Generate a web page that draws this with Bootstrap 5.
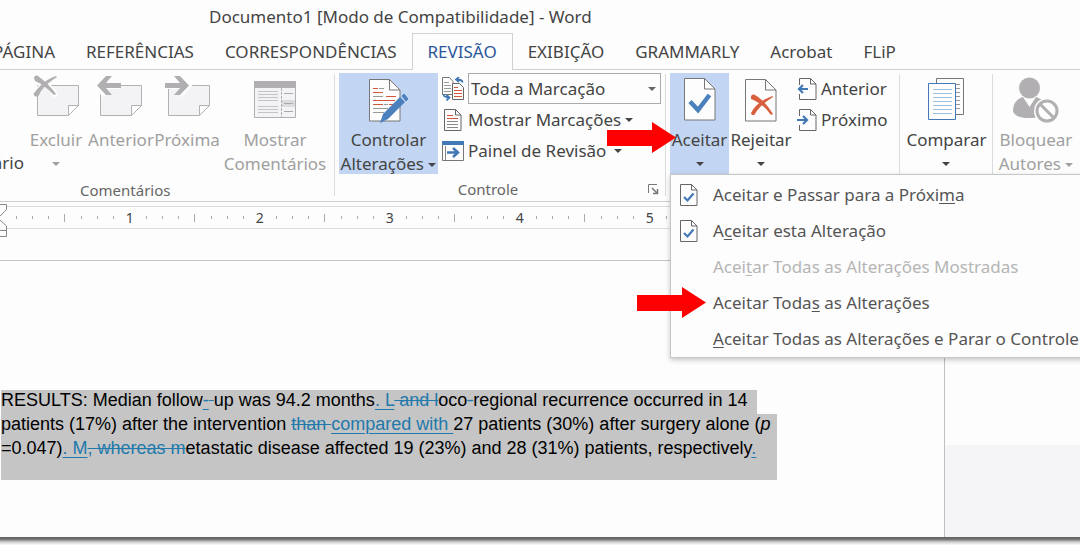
<!DOCTYPE html>
<html lang="pt-BR">
<head>
<meta charset="utf-8">
<meta name="viewport" content="width=device-width, initial-scale=1">
<title>Documento1 [Modo de Compatibilidade] - Word</title>
<link href="https://cdn.jsdelivr.net/npm/bootstrap@5.3.0/dist/css/bootstrap.min.css" rel="stylesheet">
<style>
body{font-family:"Noto Sans","Open Sans",sans-serif;font-size:17px;line-height:24px;color:#444;background:#fdfdfd;overflow:hidden}
.window{min-height:100vh}
.titlebar{height:33px;padding:5px 0 0 209px}
.ribbon-tabs{height:37px;border-bottom:1px solid #d0d1d2;flex-wrap:nowrap}
.ribbon-tabs .nav-link{color:#444;padding:6px 15px;height:37px;border:1px solid transparent;border-width:1px 1px 0;border-radius:0;white-space:nowrap;margin:0 -1px 0 0}
.ribbon-tabs .nav-link.active{color:#2b579a;background:#fdfdfd;border-color:#d0d1d2}
.cut-tab{width:70px;overflow:hidden}
.ribbon{border-bottom:1px solid #cfcfcf;height:132px}
.sep{width:1px;background:#dcdcdc;margin:4px 0 5px;flex:none}
.group{padding-top:3px;flex:none}
.caption{font-size:15px;color:#666;line-height:30px;position:relative}
.big{border:0;background:transparent;color:#444;padding:0;text-align:center;flex:none;height:101px;display:flex;flex-direction:column;align-items:center;white-space:nowrap}
.big>*{flex:none}
.big:disabled{color:#a0a0a0}
.big .pic{height:55px;display:flex;align-items:flex-start}
.big.on{background:#c2d5f2}
.line{border:0;background:transparent;color:#444;padding:0;height:31px;display:flex;align-items:center;gap:4px;white-space:nowrap}
.tri{display:inline-block;border:4px solid transparent;border-top-color:currentColor;border-bottom:0;vertical-align:3px}
.tri-row{height:24px;display:flex;align-items:center}
.cut-word{width:24px;height:102px;display:flex;justify-content:flex-end;overflow:hidden;align-items:flex-end}
.w-xs{width:64px}.w-sm{width:66px}.w-lg{width:110px}.w-track{width:99px}.w-accept{width:59px}.w-compare{width:92px}.w-block{width:85px}
.display-mode{width:193px;height:31px;padding:0 2px;border:1px solid #ababab;border-radius:0;color:#444;font-size:17px;line-height:24px;
background:#fdfdfd url("data:image/svg+xml,%3Csvg xmlns='http://www.w3.org/2000/svg' width='8' height='4'%3E%3Cpath d='M0 0h8l-4 4z' fill='%23666'/%3E%3C/svg%3E") no-repeat right 4px center;background-size:8px 4px}
.launcher{position:absolute;right:2px;top:10px;border:0;background:none;padding:0;line-height:0}
.accept-menu{display:block;left:0;top:101px;width:424px;padding:2px 0 0;border:1px solid #c6c6c6;border-radius:0;background:#fdfdfd;box-shadow:0 2px 5px rgba(0,0,0,.22);font-size:17px;z-index:5}
.accept-menu .dropdown-item{height:36px;padding:0 0 0 9px;display:flex;align-items:center;color:#555;background:none}
.accept-menu .dropdown-item.disabled{color:#b5b5b5}
.mi{width:33px;flex:none;line-height:0}
u{text-underline-offset:2px;text-decoration-thickness:1px}
.pointer{position:absolute;z-index:9;pointer-events:none}
.at-button{left:-63px;top:49px}
.at-item{left:-34px;top:112px}
.ruler{margin-top:4px;height:23px;border:1px solid #dcdcdc;border-width:1px 0;padding-left:8px;position:relative;font-size:14px}
.inch{display:grid;grid-template-columns:repeat(8,1fr);width:130px;flex:none;place-items:center;line-height:20px}
.tick{width:1px;height:3px;background:#aaa}
.tick.half{height:8px}
.indent{position:absolute;left:0;top:-3px}
.canvas{margin-top:31px;border-top:1px solid #c3c3c3}
.page{width:87.5%;border-right:1px solid #c0c0c4;padding:129px 0 57px 1px}
.comments-pane{height:184px}
.outside{background:#f5f4f7}
.copy{font:18px/20px "Liberation Sans",Arial,sans-serif;color:#000;margin:0;white-space:nowrap}
.row-text{display:block;width:fit-content;background:#c5c5c5;height:24px}
.row-a{padding-right:10px}.row-b{padding-right:7px}.row-c{height:42px;min-width:776px}
.copy ins,.copy del{color:#2279ab;text-decoration-thickness:1px}
.copy ins{text-underline-offset:3px}
.edge{height:8px;background:linear-gradient(#5d5f5d,#757775 30%,#c9c9c9 60%,#fdfdfd)}
</style>
</head>
<body>
<svg width="0" height="0" class="position-absolute" aria-hidden="true">
<defs>
<symbol id="note" viewBox="0 0 46 44"><path d="M4.500 11.500h41v20l-10 10h-31z" fill="#f3f2f4" stroke="#b3b1b4"/><path d="M35.500 41.500v-10h10z" fill="#fdfdfd" stroke="#b3b1b4"/></symbol>
<symbol id="sheet" viewBox="0 0 32 43"><path d="M.5.500h20l10.500 10.500v31H.5z" fill="#fdfdfd" stroke="#777"/><path d="M20.500.5v10.500H31" fill="none" stroke="#777"/></symbol>
<symbol id="sheet-s" viewBox="0 0 18 22"><path d="M.5.500h11l5.500 5.500v15.500H.5z" fill="#fdfdfd" stroke="#666"/><path d="M11.500.5V6H17" fill="none" stroke="#666"/></symbol>
<symbol id="sheet-ok" viewBox="0 0 18 22"><use href="#sheet-s" width="18" height="22"/><path d="M4 13l3.500 3.500L13.500 9.500" fill="none" stroke="#4178b5" stroke-width="2.200"/></symbol>
<symbol id="red-arrow" viewBox="0 0 69 31"><path d="M0 8h45V0l24 15.500L45 31v-7H0z" fill="#fe0000"/></symbol>
</defs></svg>

<div class="window d-flex flex-column">
<header class="titlebar text-nowrap">Documento1 [Modo de Compatibilidade] - Word</header>
<nav class="nav nav-tabs ribbon-tabs" aria-label="Guias">
<div class="cut-tab d-flex justify-content-end"><a class="nav-link" href="#">PÁGINA</a></div>
<a class="nav-link" href="#">REFERÊNCIAS</a>
<a class="nav-link" href="#">CORRESPONDÊNCIAS</a>
<a class="nav-link active" href="#" aria-current="page">REVISÃO</a>
<a class="nav-link" href="#">EXIBIÇÃO</a>
<a class="nav-link" href="#">GRAMMARLY</a>
<a class="nav-link" href="#">Acrobat</a>
<a class="nav-link" href="#">FLiP</a>
</nav>

<section class="ribbon d-flex">
<div class="group">
 <div class="d-flex">
  <div class="cut-word">ário</div>
  <button class="big w-xs" disabled><span class="pic"><svg width="46" height="46" viewBox="0 0 46 44"><use href="#note" width="46" height="44"/><path d="M3 4c8 4 15 10 20 18M24 3C14 6 7 12 3 20" fill="none" stroke="#fdfdfd" stroke-width="6"/><path d="M1 4c0-2 2-3 4-2 7 5 13 11 18 18l-2 1C15 15 9 10 2 7z" fill="#b1afb2"/><path d="M24 3C16 8 9 14 6 21c-1 2-4 2-5 0-1-1 0-2 1-3C7 11 14 5 23 2z" fill="#b1afb2"/></svg></span><span>Excluir</span><span class="tri-row"><i class="tri"></i></span></button>
  <button class="big w-sm" disabled><span class="pic pe-1"><svg width="46" height="46" viewBox="0 0 46 44"><use href="#note" width="46" height="44"/><path d="M25 11H5" stroke="#fdfdfd" stroke-width="8"/><path d="M10 2l-8 9.500L10 21" fill="none" stroke="#fdfdfd" stroke-width="8"/><path d="M25 9v5H10l6 7h-6L1 11.500 10 2h6l-6 7z" fill="#b1afb2"/></svg></span><span>Anterior</span></button>
  <button class="big w-sm" disabled><span class="pic"><svg width="46" height="46" viewBox="0 0 46 44"><use href="#note" width="46" height="44"/><path d="M1 11h22" stroke="#fdfdfd" stroke-width="8"/><path d="M15 2l8 9.500L15 21" fill="none" stroke="#fdfdfd" stroke-width="8"/><path d="M1 9v5h15l-6 7h6l9-9.500L16 2h-6l6 7z" fill="#b1afb2"/></svg></span><span>Próxima</span></button>
  <button class="big w-lg" disabled><span class="pic pt-2"><svg width="42" height="37" viewBox="0 0 42 37"><path d="M.5.5h41v36H.5z" fill="#f3f2f4" stroke="#b1afb2"/><path d="M0 0h42v7H0z" fill="#b1afb2"/><path d="M4 10.500h20M4 13.500h20M4 16.500h20M4 19.500h20M4 25.500h20M4 28.500h20M4 31.500h20" stroke="#c4c3c5"/><path d="M27.500 7v29" stroke="#b1afb2" stroke-dasharray="3 1"/><path d="M28 19h13v7H28z" fill="#dcdcdc"/><path d="M30 12.500h9M30 22.500h9M30 30.500h9" stroke="#a9a8aa"/></svg></span><span>Mostrar</span><span>Comentários</span></button>
 </div>
 <div class="caption ps-5"><span class="ps-4 ms-2">Comentários</span></div>
</div>
<div class="sep ms-1 me-1"></div>
<div class="group">
 <div class="d-flex">
  <button class="big on w-track"><span class="pic pt-1"><svg width="42" height="46" viewBox="0 0 42 46"><g transform="translate(1 2)"><use href="#sheet" width="32" height="43"/><path d="M4 9.500h5M4 13.500h10M17 17.500h10M4 21.500h22M4 25.500h10M20 25.500h5" stroke="#d5573a"/><path d="M10 9.500h5M4 17.500h10M15 25.500h4M4 29.500h15M4 33.500h11" stroke="#999"/></g><path d="M12 46l3-9L32 20l5 5-17 17z" fill="#4a80bb"/><path d="M34 19l2-2 4 5-2 2z" fill="#4a80bb" stroke="#4a80bb"/></svg></span><span>Controlar</span><span>Alterações <i class="tri"></i></span></button>
  <div class="d-flex flex-column ms-1">
   <div class="d-flex align-items-center gap-1">
    <svg width="22" height="24" viewBox="0 0 22 24"><path d="M.5.500h7l3.500 4V17.500H.5z" fill="#fdfdfd" stroke="#777"/><path d="M2 5.500h5M2 8.500h7M2 11.500h7M2 14.500h7" stroke="#999"/><path d="M10.500 6.500h7l4 4v12h-11z" fill="#fdfdfd" stroke="#666"/><path d="M12 10.500h4M12 13.500h8M12 16.500h8M12 19.500h8" stroke="#d5573a"/><path d="M20.500 5.500c0-3-3-3-6-3M17 0l-3 2.500L17 5M1.500 17c0 3 3 3.500 6 3.500M4.500 18l3 2.500-3 3" fill="none" stroke="#4178b5" stroke-width="1.800"/></svg>
    <select class="form-select display-mode" aria-label="Exibir para revisão"><option>Toda a Marcação</option></select>
   </div>
   <button class="line"><svg width="22" height="22" viewBox="-2 0 22 22"><use href="#sheet-s" width="18" height="22"/><path d="M3 6.500h6M3 9.500h11" stroke="#d5573a"/><path d="M3 12.500h11M3 15.500h11M3 18.500h11" stroke="#888"/></svg>Mostrar Marcações <i class="tri"></i></button>
   <button class="line"><svg width="22" height="20" viewBox="0 0 22 20"><path d="M.5.500h21v19H.5z" fill="#fdfdfd" stroke="#777"/><path d="M0 0h22v4H0z" fill="#4178b5"/><path d="M3.500 5v14" stroke="#888"/><path d="M5 11.500h11M11 7l5 4.500-5 4.500" fill="none" stroke="#4178b5" stroke-width="2.500"/></svg>Painel de Revisão <i class="tri ms-1"></i></button>
  </div>
 </div>
 <div class="caption text-center"><span class="pe-4">Controle</span><button class="launcher" aria-label="Opções de controle"><svg width="11" height="11" viewBox="0 0 11 11"><path d="M.5 9V.500H9" fill="none" stroke="#777"/><path d="M4 4l5 5M5 9.500h4.500V5" fill="none" stroke="#777" stroke-width="1.500"/></svg></button></div>
</div>
<div class="sep ms-1 me-1"></div>
<div class="group pe-1">
 <div class="d-flex position-relative">
  <button class="big on w-accept" aria-expanded="true"><span class="pic pt-1"><svg width="32" height="44" viewBox="0 -1 32 44"><use href="#sheet" width="32" height="43"/><path d="M6 23.500l8 8.500 11.500-15" fill="none" stroke="#4a80bb" stroke-width="4.500"/></svg></span><span>Aceitar</span><span class="tri-row"><i class="tri"></i></span></button>
  <button class="big w-xs"><span class="pic pt-1"><svg width="32" height="45" viewBox="0 -2 32 45"><use href="#sheet" width="32" height="43"/><path d="M6 18c0-2 2-3 4-2 7 4 13 11 18 19l-2 1C20 28 14 23 6 20zM28 17l0 1C20 23 13 29 10 35c-1 2-4 1-4-1C10 26 18 20 28 17z" fill="#d9603f"/></svg></span><span>Rejeitar</span><span class="tri-row"><i class="tri"></i></span></button>
  <div class="ms-1">
   <button class="line"><svg width="20" height="22" viewBox="0 0 20 22"><use href="#sheet-s" x="2" width="18" height="22"/><path d="M0 7h9v9H0z" fill="#fdfdfd"/><path d="M11 11H2M6 7l-4 4 4 4" fill="none" stroke="#4178b5" stroke-width="2.200"/></svg>Anterior</button>
   <button class="line"><svg width="20" height="22" viewBox="0 0 20 22"><use href="#sheet-s" x="2" width="18" height="22"/><path d="M1 7h7v9H1z" fill="#fdfdfd"/><path d="M0 11h9M6 7l4 4-4 4" fill="none" stroke="#4178b5" stroke-width="2.200"/></svg>Próximo</button>
  </div>
  <svg class="pointer at-button" width="69" height="31"><use href="#red-arrow"/></svg>
  <div class="dropdown-menu accept-menu">
   <a class="dropdown-item" href="#"><span class="mi"><svg width="18" height="22"><use href="#sheet-ok"/></svg></span><span>Aceitar e Passar para a Próxi<u>m</u>a</span></a>
   <a class="dropdown-item" href="#"><span class="mi"><svg width="18" height="22"><use href="#sheet-ok"/></svg></span><span>A<u>c</u>eitar esta Alteração</span></a>
   <a class="dropdown-item disabled" href="#" aria-disabled="true"><span class="mi"></span><span>Acei<u>t</u>ar Todas as Alterações Mostradas</span></a>
   <a class="dropdown-item" href="#"><span class="mi"></span><span>Aceitar Toda<u>s</u> as Alterações</span></a>
   <a class="dropdown-item" href="#"><span class="mi"></span><span><u>A</u>ceitar Todas as Alterações e Parar o Controle</span></a>
   <svg class="pointer at-item" width="69" height="31"><use href="#red-arrow"/></svg>
  </div>
 </div>
</div>
<div class="sep ms-2"></div>
<div class="group">
 <button class="big w-compare"><span class="pic pt-1"><svg width="37" height="44" viewBox="0 -1 37 44"><path d="M8.500.5h27v36h-27z" fill="#fdfdfd" stroke="#777"/><path d="M28 6.500h4M28 10.500h4M28 14.500h4M28 18.500h4M28 22.500h4M28 26.500h4M28 30.500h4" stroke="#999"/><path d="M.5 5.500h27v36H.5z" fill="#fdfdfd" stroke="#4178b5"/><path d="M5 11.500h19M5 15.500h19M5 19.500h19M5 23.500h19M5 27.500h19M5 31.500h19M5 35.500h19" stroke="#9dbfe0"/></svg></span><span>Comparar</span><span class="tri-row"><i class="tri"></i></span></button>
</div>
<div class="sep"></div>
<div class="group">
 <button class="big w-block" disabled><span class="pic pt-1"><svg width="46" height="48" viewBox="0 0 46 48"><circle cx="16.500" cy="11" r="10.500" fill="#b1afb2"/><path d="M0 34c0-8 4-12 10-14l6.500 10L23 20c6 2 10 5 10 14-2 5-8 7-16.500 7S1 39 0 34z" fill="#b1afb2"/><circle cx="34" cy="34" r="13" fill="#fdfdfd"/><circle cx="34" cy="34" r="10" fill="none" stroke="#b1afb2" stroke-width="3"/><path d="M27 27l14 14" stroke="#b1afb2" stroke-width="3"/></svg></span><span>Bloquear</span><span>Autores <i class="tri"></i></span></button>
</div>
</section>

<div class="ruler d-flex" id="ruler" aria-label="Régua">
<svg class="indent" width="8" height="34" viewBox="0 0 8 34"><path d="M0 .500h6.500v5L0 12M0 16l6.500 6v10.500H0M0 26.500h6.500" fill="#fdfdfd" stroke="#888"/></svg>
</div>

<main class="canvas d-flex flex-grow-1">
<article class="page">
<p class="copy"><span class="row-text row-a">RESULTS: Median follow<ins>-</ins><del> </del>up was 94.2 months<ins>. L</ins><del> and l</del>oco<del>-</del>regional recurrence occurred in 14</span>
<span class="row-text row-b">patients (17%) after the intervention <del>than </del><ins>compared with </ins>27 patients (30%) after surgery alone (<em>p</em></span>
<span class="row-text row-c">=0.047)<ins>. M</ins><del>, whereas m</del>etastatic disease affected 19 (23%) and 28 (31%) patients, respectively<ins>.</ins></span></p>
</article>
<aside class="flex-grow-1 d-flex flex-column"><div class="comments-pane"></div><div class="outside flex-grow-1"></div></aside>
</main>
<div class="edge"></div>
</div>
<script>
// Each inch has seven ticks, the middle one longer, followed by its number.
const ruler=document.getElementById('ruler'),inches=5,small='<i class="tick"></i>'.repeat(3);
for(let n=1;n<=inches+1;n++){
  const label=n<=inches?`<span>${n}</span>`:'';
  ruler.insertAdjacentHTML('beforeend',`<div class="inch">${small}<i class="tick half"></i>${small}${label}</div>`);
}
</script>
<script src="https://cdn.jsdelivr.net/npm/bootstrap@5.3.0/dist/js/bootstrap.bundle.min.js"></script>
</body>
</html>
